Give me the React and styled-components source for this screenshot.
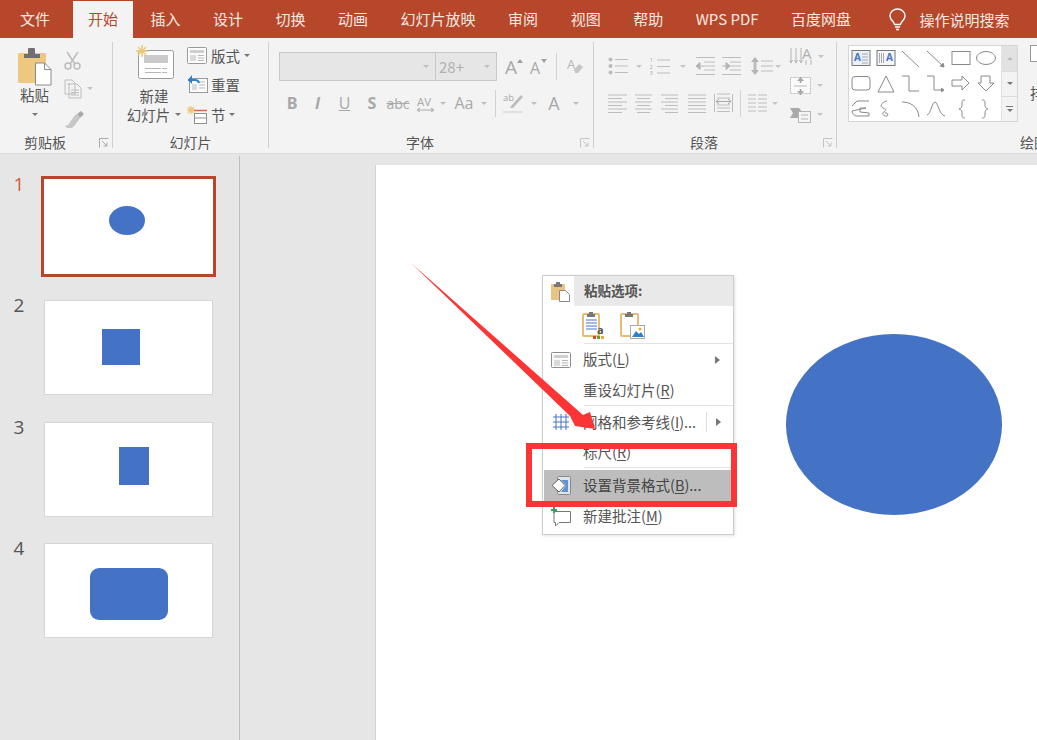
import styled, { createGlobalStyle } from "styled-components";

const FONT = `"Noto Sans CJK SC", "Open Sans", "Liberation Sans", sans-serif`;
const BRAND = "#b7472a";
const OFF = "#bdbdbd";
const BLUE = "#4472c4";

const GlobalStyle = createGlobalStyle`
  html, body { margin: 0; height: 100%; overflow: hidden; }
  #root { height: 100%; }
  svg { display: block; flex: none; overflow: visible; }
`;

const Page = styled.div`
  width: 1037px;
  height: 740px;
  display: flex;
  flex-direction: column;
  overflow: hidden;
  font-family: ${FONT};
  color: #444;
  background: #e6e6e6;
`;

/* title tabs */
const TabBar = styled.nav`
  height: 38px;
  flex: none;
  display: flex;
  align-items: flex-end;
  gap: 2.5px;
  padding-left: 5px;
  background: ${BRAND};
`;
const Tab = styled.div`
  height: 37px;
  padding: 0 15px;
  line-height: 35px;
  font-size: 15px;
  white-space: nowrap;
  color: ${(p) => (p.$active ? BRAND : "#f6e7e2")};
  background: ${(p) => (p.$active ? "#f3f3f3" : "transparent")};
  margin-left: ${(p) => p.$ml || 0}px;
`;
const SearchHint = styled.div`
  display: flex;
  align-items: center;
  gap: 14px;
  height: 37px;
  line-height: 35px;
  margin-left: 20px;
  font-size: 15px;
  color: #f6e7e2;
  white-space: nowrap;
`;

/* ribbon */
const Ribbon = styled.div`
  height: 116px;
  flex: none;
  box-sizing: border-box;
  display: flex;
  align-items: flex-start;
  padding-top: 4px;
  background: #f3f3f3;
  border-bottom: 1px solid #dcdcdc;
`;
const Group = styled.section`
  position: relative;
  flex: none;
  box-sizing: border-box;
  width: ${(p) => p.$w}px;
  height: 106px;
  border-right: ${(p) => (p.$last ? "none" : "1px solid #cfcfcf")};
`;
const GroupBody = styled.div`
  height: 93px;
  display: flex;
  align-items: flex-start;
  padding-left: ${(p) => p.$pl || 0}px;
`;
const GroupLabel = styled.div`
  height: 13px;
  line-height: 14px;
  font-size: 14px;
  color: #555;
  text-align: center;
  white-space: nowrap;
  padding-right: ${(p) => (p.$launcher ? 22 : 0)}px;
`;
const Launcher = styled.div`
  position: absolute;
  right: 3px;
  bottom: 0;
`;
const Caret = styled.i`
  display: block;
  flex: none;
  width: 0;
  height: 0;
  border-left: 3.5px solid transparent;
  border-right: 3.5px solid transparent;
  border-top: 3.5px solid ${(p) => p.$color || "#777"};
`;
const CaretCell = styled.div`
  flex: none;
  width: ${(p) => p.$w}px;
  display: flex;
  justify-content: center;
  margin-top: ${(p) => p.$mt || 0}px;
`;
const Column = styled.div`
  display: flex;
  flex-direction: column;
  align-items: ${(p) => p.$align || "center"};
  width: ${(p) => (p.$w ? `${p.$w}px` : "auto")};
  margin-left: ${(p) => p.$ml || 0}px;
  padding-top: ${(p) => p.$pt || 0}px;
`;
const BigLabel = styled.div`
  font-size: 14.5px;
  line-height: 19px;
  color: #555;
  white-space: nowrap;
  display: flex;
  align-items: center;
  gap: 5px;
  margin-top: ${(p) => p.$mt || 0}px;
`;
const SmallTool = styled.div`
  height: ${(p) => p.$h || 30}px;
  display: flex;
  align-items: center;
  gap: ${(p) => p.$gap || 4}px;
  font-size: 14.5px;
  line-height: 17px;
  color: #555;
  white-space: nowrap;
`;
const ToolRow = styled.div`
  display: flex;
  align-items: center;
  height: ${(p) => p.$h || 24}px;
  margin-top: ${(p) => p.$mt || 0}px;
`;
const FontBox = styled.div`
  box-sizing: border-box;
  width: ${(p) => p.$w}px;
  height: 29px;
  display: flex;
  align-items: center;
  justify-content: space-between;
  padding: 0 6px 0 3px;
  background: #e6e6e6;
  border: 1px solid #c8c8c8;
  border-left-width: ${(p) => (p.$joined ? 0 : 1)}px;
  font-size: 15px;
  color: #b0b0b0;
`;
const Cell = styled.div`
  flex: none;
  width: ${(p) => p.$w}px;
  margin-left: ${(p) => p.$ml || 0}px;
  display: flex;
  justify-content: ${(p) => (p.$left ? "flex-start" : "center")};
  align-items: center;
  font-family: "Open Sans", "Liberation Sans", sans-serif;
  font-size: ${(p) => p.$size || 15}px;
  font-weight: ${(p) => (p.$bold ? 700 : 400)};
  font-style: ${(p) => (p.$italic ? "italic" : "normal")};
  text-decoration: ${(p) => p.$deco || "none"};
  color: #a8a8a8;
`;
const RibbonDivider = styled.div`
  flex: none;
  width: 1px;
  height: 27px;
  margin-left: ${(p) => p.$ml}px;
  margin-right: ${(p) => p.$mr || 0}px;
  background: #d2d2d2;
`;
const StrikeLabel = styled.span`
  text-decoration: line-through;
`;
const Gallery = styled.div`
  margin-top: 3px;
  box-sizing: border-box;
  width: 170px;
  height: 77px;
  display: flex;
  background: #fff;
  border: 1px solid #d6d6d6;
`;
const ShapeGrid = styled.div`
  width: 150px;
  padding: 4px 0 0 2px;
  display: grid;
  grid-template-columns: repeat(6, 25px);
  grid-auto-rows: 25px;
`;
const GalleryScroll = styled.div`
  width: 18px;
  display: flex;
  flex-direction: column;
  border-left: 1px solid #e2e2e2;
`;
const ScrollButton = styled.div`
  flex: ${(p) => p.$grow};
  display: flex;
  flex-direction: column;
  align-items: center;
  justify-content: center;
  gap: 2px;
  background: ${(p) => (p.$off ? "#e2e2e2" : "#f3f3f3")};
  border-bottom: ${(p) => (p.$end ? "none" : "1px solid #dcdcdc")};
`;
const ScrollBar = styled.i`
  display: block;
  width: 7px;
  height: 1px;
  background: #777;
`;
const UpCaret = styled(Caret)`
  transform: rotate(180deg);
`;

/* work area */
const Workspace = styled.main`
  flex: 1;
  min-height: 0;
  display: flex;
`;
const SlideRail = styled.aside`
  flex: none;
  box-sizing: border-box;
  width: 240px;
  margin-top: 2px;
  padding-top: 23px;
  display: flex;
  flex-direction: column;
  gap: 26.3px;
  border-right: 1px solid #bdbdbd;
`;
const RailRow = styled.div`
  display: flex;
  align-items: flex-start;
`;
const SlideNumber = styled.div`
  flex: none;
  width: 38px;
  margin: -5px 6px 0 0;
  text-align: center;
  font-family: "Open Sans", "Liberation Sans", sans-serif;
  font-size: 19px;
  line-height: 20px;
  color: ${(p) => (p.$active ? "#d2593b" : "#555")};
`;
const Thumb = styled.div`
  position: relative;
  box-sizing: border-box;
  width: 169px;
  height: 95px;
  background: #fff;
  border: 1px solid ${(p) => (p.$active ? "#fff" : "#d6d6d6")};
  outline: ${(p) => (p.$active ? `3px solid ${BRAND}` : "none")};
`;
const Shape = styled.div`
  position: absolute;
  left: ${(p) => p.$x}px;
  top: ${(p) => p.$y}px;
  width: ${(p) => p.$w}px;
  height: ${(p) => p.$h}px;
  background: ${BLUE};
  border-radius: ${(p) => p.$radius || "0"};
`;
const Stage = styled.div`
  flex: 1;
  min-width: 0;
  display: flex;
  padding: 11px 0 0 135px;
`;
const Slide = styled.div`
  position: relative;
  flex: 1;
  background: #fff;
  border-left: 1px solid #d2d2d2;
`;

/* context menu */
const Menu = styled.div`
  position: absolute;
  left: 166px;
  top: 110px;
  box-sizing: border-box;
  width: 192px;
  height: 260px;
  background: #fff;
  border: 1px solid #cdcdcd;
  box-shadow: 1px 1px 3px rgba(0, 0, 0, 0.12);
  font-size: 14.5px;
  color: #555;
`;
const MenuHead = styled.div`
  display: flex;
  height: 30px;
`;
const HeadIcon = styled.div`
  width: 31px;
  display: flex;
  justify-content: center;
  align-items: center;
  padding-left: 3px;
  box-sizing: border-box;
`;
const HeadLabel = styled.div`
  flex: 1;
  padding-left: 10px;
  line-height: 29px;
  font-size: 13.5px;
  font-weight: 700;
  color: #555;
  background: #e9e9e9;
`;
const PasteRow = styled.div`
  height: 37px;
  display: flex;
  align-items: center;
  gap: 13px;
  padding-left: 39px;
`;
const MenuSep = styled.div`
  height: 1px;
  margin-left: 41px;
  background: #e2e2e2;
`;
const MenuRow = styled.div`
  height: ${(p) => p.$h}px;
  display: flex;
  align-items: center;
  margin: ${(p) => (p.$hot ? "2px 1px 0" : "0")};
  background: ${(p) => (p.$hot ? "#bdbdbd" : "transparent")};
  color: ${(p) => (p.$hot ? "#444" : "#555")};
  white-space: nowrap;
`;
const MenuIcon = styled.div`
  flex: none;
  width: ${(p) => (p.$hot ? 39 : 40)}px;
  display: flex;
  justify-content: center;
  padding-right: 4px;
  box-sizing: border-box;
`;
const MenuText = styled.div`
  flex: 1;
  padding-bottom: 2px;
  u { text-underline-offset: 2px; }
`;
const SubArrow = styled.i`
  display: block;
  flex: none;
  width: 0;
  height: 0;
  margin-right: ${(p) => p.$mr || 13}px;
  border-top: 4.5px solid transparent;
  border-bottom: 4.5px solid transparent;
  border-left: 5px solid #777;
`;
const SplitBar = styled.i`
  display: block;
  flex: none;
  width: 1px;
  height: 20px;
  margin-right: 9px;
  background: #dcdcdc;
`;

/* red marks drawn over the slide */
const Highlight = styled.div`
  position: absolute;
  left: 150px;
  top: 278px;
  box-sizing: border-box;
  width: 211px;
  height: 64px;
  border: 6px solid #fb3535;
`;
const ArrowMark = styled.svg`
  position: absolute;
  left: 34px;
  top: 97px;
`;

const Ico = ({ w, h, color = OFF, sw = 1, children }) => (
  <svg width={w} height={h} viewBox={`0 0 ${w} ${h}`} fill="none" stroke={color} strokeWidth={sw}>
    {children}
  </svg>
);

const PasteIcon = () => (
  <Ico w={36} h={39} color="#8a8a8a">
    <rect x="1" y="6" width="28" height="30" rx="1" fill="#edc87e" stroke="none" />
    <path d="M7 11V7h4V2a1 1 0 0 1 1-1h5a1 1 0 0 1 1 1v5h5v4z" fill="#707070" stroke="none" />
    <path d="M18.500 16h9l6.500 6.500v15.500h-15.500z" fill="#fff" />
    <path d="M27.500 16v6.500h6.500" />
  </Ico>
);
const ScissorsIcon = () => (
  <Ico w={17} h={19} sw={1.5}>
    <path d="M3 1l8 12M14 1L6 13" />
    <circle cx="4" cy="15" r="3" />
    <circle cx="13" cy="15" r="3" />
  </Ico>
);
const CopyIcon = () => (
  <Ico w={18} h={20}>
    <path d="M1 1h7l3 3v11H1zM5 5h8l4 4v10H5z" fill="#f3f3f3" />
    <path d="M7 11h8M7 13.500h8M7 16h8M3 5h3" />
  </Ico>
);
const BrushIcon = () => (
  <Ico w={20} h={18} color="#c6c6c6" sw={0}>
    <path d="M12 3l4 4-5 7-3 3H3l-2-2 3-1 2-3z" fill="#c6c6c6" />
    <path d="M13 3l4-3 3 3-3 3-1 1z" fill="#a9a9a9" />
  </Ico>
);
const NewSlideIcon = () => (
  <Ico w={40} h={36} color="#9b9b9b">
    <rect x="4.500" y="6.500" width="35" height="28" rx="2" fill="#fff" />
    <rect x="10" y="11" width="24" height="8" fill="#cacaca" stroke="none" />
    <path d="M11 24.500h22M11 28.500h22" strokeDasharray="16 1" stroke="#b5b5b5" />
    <path d="M8 1v12M2 7h12M4 3l8 8M12 3l-8 8" stroke="#eec777" strokeWidth="1.500" />
  </Ico>
);
const LayoutIcon = ({ w = 20, h = 17, color = "#9a9a9a" }) => (
  <Ico w={w} h={h} color={color}>
    <rect x=".5" y=".5" width={w - 1} height={h - 1} rx="1" fill="#fbfbfb" />
    <rect x="3" y="3" width={w - 6} height="3" fill="#cfcfcf" stroke="none" />
    <rect x="3" y="8" width="6" height="6" fill="#dadada" stroke="none" />
    <path d={`M11 8.500h${w - 14}M11 11h${w - 14}M11 13.500h${w - 14}`} stroke="#b8b8b8" />
  </Ico>
);
const ResetIcon = () => (
  <Ico w={21} h={18} color="#9a9a9a">
    <rect x="2.500" y="3.500" width="18" height="14" fill="#fbfbfb" />
    <path d="M12 7h6M12 10h6M12 13h6" stroke="#b8b8b8" />
    <rect x="5" y="9" width="5" height="6" fill="#dadada" stroke="none" />
    <path d="M1 5h7a4 4 0 0 1 4 3" stroke="#2f7fc9" strokeWidth="2" />
    <path d="M5 0L1 5l4 4z" fill="#2f7fc9" stroke="none" />
  </Ico>
);
const SectionIcon = () => (
  <Ico w={21} h={18} color="#8f8f8f">
    <path d="M4 0v8M0 4h8M1 1l6 6M7 1L1 7" stroke="#eec777" strokeWidth="1.400" />
    <path d="M7 4.500h13" stroke="#d0694f" strokeWidth="1.500" />
    <rect x="7.500" y="7.500" width="12" height="10" fill="#fff" />
    <path d="M7.500 12h12" />
  </Ico>
);
const EraserIcon = () => (
  <svg width="17" height="17" viewBox="0 0 17 17">
    <text x="0" y="11" fontSize="13" fontFamily="Open Sans" fill="#b5b5b5">A</text>
    <path d="M7 12l5-6 4 3-5 6H8z" fill="#c6c6c6" />
  </svg>
);
const SpacingIcon = () => (
  <svg width="19" height="17" viewBox="0 0 19 17" fill="none" stroke="#aaa">
    <text x="1" y="11" fontSize="11.500" fontFamily="Open Sans" fill="#aaa" stroke="none">AV</text>
    <path d="M1.500 15h16M1 15l3-2M1 15l3 2M18 15l-3-2M18 15l-3 2" />
  </svg>
);
const GrowFont = ({ up, size }) => (
  <svg width="18" height="17" viewBox="0 0 18 17">
    <text x="0" y="16" fontSize={size} fontFamily="Open Sans" fill="#a8a8a8">A</text>
    <path d={up ? "M12 5l3-4 3 4z" : "M11 1h6l-3 4z"} fill="#a0a0a0" />
  </svg>
);
const HighlightPen = () => (
  <svg width="21" height="20" viewBox="0 0 21 20" fill="none">
    <text x="0" y="8" fontSize="9.500" fontFamily="Open Sans" fill="#a8a8a8">ab</text>
    <path d="M8 13L18 2l2 2L10 15H7z" fill="#bdbdbd" />
    <path d="M0 19h20" stroke="#dfdfdf" strokeWidth="2" />
  </svg>
);
const BulletsIcon = () => (
  <Ico w={20} h={18}>
    <path d="M7 2.500h13M7 9h13M7 15.500h13" />
    <circle cx="2.500" cy="2.500" r="2" fill="#bbb" stroke="none" />
    <circle cx="2.500" cy="9" r="2" fill="#bbb" stroke="none" />
    <circle cx="2.500" cy="15.500" r="2" fill="#bbb" stroke="none" />
  </Ico>
);
const NumberingIcon = () => (
  <svg width="20" height="19" viewBox="0 0 20 19" fill="none" stroke={OFF}>
    <path d="M7 3h13M7 9.500h13M7 16h13" />
    <text x="0" y="5" fontSize="4.500" fontFamily="Open Sans" fill="#999" stroke="none">1</text>
    <text x="0" y="11.500" fontSize="4.500" fontFamily="Open Sans" fill="#999" stroke="none">2</text>
    <text x="0" y="18" fontSize="4.500" fontFamily="Open Sans" fill="#999" stroke="none">3</text>
  </svg>
);
const IndentIcon = ({ more }) => (
  <Ico w={20} h={18}>
    <path d="M1 .5h19M9 5h11M9 9h11M9 13h11M1 17.500h19" />
    <path d={more ? "M1 9h4M5 5.500L9 9l-4 3.500z" : "M9 9H5M5 5.500L1 9l4 3.500z"} fill="#b5b5b5" stroke="#b5b5b5" />
  </Ico>
);
const LineSpacingIcon = () => (
  <Ico w={22} h={20}>
    <path d="M10 5h12M10 10h12M10 15h12" />
    <path d="M4 3v14" strokeWidth="3" />
    <path d="M0 6l4-5 4 5zM0 14l4 5 4-5z" fill="#b5b5b5" stroke="none" />
  </Ico>
);
const alignLines = {
  left: "M0 1h19M0 4.500h14M0 8h19M0 11.500h14M0 15h19M0 18.500h14",
  center: "M0 1h17M2 4.500h13M0 8h17M2 11.500h13M0 15h17M2 18.500h13",
  right: "M0 1h17M4 4.500h13M0 8h17M4 11.500h13M0 15h17M4 18.500h13",
  justify: "M0 1h18M0 4.500h18M0 8h18M0 11.500h18M0 15h18M0 18.500h18",
};
const AlignIcon = ({ kind }) => (
  <Ico w={19} h={19}>
    <path d={alignLines[kind]} />
  </Ico>
);
const DistributeIcon = () => (
  <Ico w={19} h={20}>
    <path d="M.5 1v18M18.500 1v18M3 1h13M3 5h13M3 12h13M3 15h13M3 18.500h13" />
    <path d="M2 8.500h15M2 8.500l3-2.500M2 8.500L5 11M17 8.500L14 6M17 8.500L14 11" stroke="#a8a8a8" />
  </Ico>
);
const ColumnsIcon = () => (
  <Ico w={19} h={19}>
    <path d="M0 1h8M10 1h9M0 5h8M10 5h9M0 9h8M10 9h9M0 13h8M10 13h9M0 17h8M10 17h9" />
  </Ico>
);
const TextDirIcon = () => (
  <svg width="26" height="20" viewBox="0 0 26 20" fill="none" stroke="#b5b5b5">
    <path d="M1 1v15M6 1v15M11 1v15M1 16l-1-3M1 16l1.500-3M6 16l-1.500-3M6 16l1.500-3M11 16l-1.500-3M11 16l1.500-3" />
    <text x="12" y="12" fontSize="15" fontFamily="Open Sans" fill="#b0b0b0" stroke="none">A</text>
    <path d="M16 13v5M21 13v5" />
  </svg>
);
const AlignTextIcon = () => (
  <Ico w={21} h={20} color="#bbb">
    <rect x=".5" y="1.500" width="20" height="16" fill="#fafafa" strokeDasharray="2 1" />
    <path d="M10.500 1v6M10.500 13v6" stroke="#999" strokeWidth="1.500" />
    <path d="M7 5l3.500-4L14 5zM7 15l3.500 4 3.500-4z" fill="#aaa" stroke="none" />
    <path d="M4 10h13" />
  </Ico>
);
const SmartArtIcon = () => (
  <Ico w={21} h={17} color="#b5b5b5">
    <path d="M0 2h9l4 5-4 5H0l3-5z" fill="#a9a9a9" stroke="none" />
    <rect x="8.500" y="5.500" width="12" height="11" fill="#f5f5f5" />
    <path d="M11 9h7M11 13h7" />
  </Ico>
);
const LaunchIcon = ({ color = "#a8a8a8" }) => (
  <Ico w={10} h={10} color={color}>
    <path d="M.5 9.500v-9h9M3 3l5 5M8 4.500V8H4.500" />
  </Ico>
);
const BulbIcon = () => (
  <Ico w={17} h={22} color="#fff" sw={1.400}>
    <path d="M5.500 15.500C5 12 1 11 1 7a7.500 7 0 0 1 15 0c0 4-4 5-4.500 8.500z" />
    <path d="M6 18h5M7 20.500h3" />
  </Ico>
);

const S = "#8a8a8a";
const gallery = [
  <g key="a"><rect x="1" y=".5" width="18" height="15" fill="#eaf0fa" stroke="#777" /><text x="3" y="11" fontSize="10" fontWeight="700" fontFamily="Open Sans" fill={BLUE} stroke="none">A</text><path d="M11 4h6M11 7h6M11 10h6M11 13h6" stroke="#aaa" /></g>,
  <g key="b"><rect x="1" y=".5" width="18" height="15" fill="#f4f6fb" stroke="#777" /><text x="10" y="11" fontSize="10" fontWeight="700" fontFamily="Open Sans" fill={BLUE} stroke="none">A</text><path d="M3.500 3v10M5.500 3v10M7.500 3v10" stroke="#aaa" /></g>,
  <path key="c" d="M1 1l17 16" />,
  <g key="d"><path d="M1 1l17 16" /><path d="M14 16l4 1-1-4" fill={S} /></g>,
  <rect key="e" x="1" y="1.500" width="18" height="13" />,
  <ellipse key="f" cx="10" cy="8" rx="9.500" ry="6.500" />,
  <rect key="g" x="1" y="1.500" width="18" height="13.500" rx="3" />,
  <path key="h" d="M10 1L2 17h16z" />,
  <path key="i" d="M1 1h7v15h10" />,
  <g key="j"><path d="M1 1h7v14h9" /><path d="M15 13l3 2-3 2" fill={S} /></g>,
  <path key="k" d="M1 5h10V1l7 7-7 7v-4H1z" />,
  <path key="l" d="M5 1h9v7h4l-8 8-8-8h3z" />,
  <path key="m" d="M1 6l5-5h12M15 8H9v4l9 1v3H6a5 5 0 0 1-5-5z" />,
  <path key="n" d="M11 1C6 2 3 6 7 8c3 1 4 2 1 4-3 1 0 5 3 4 2-1 0-4-2-3" />,
  <path key="o" d="M1 2c8 0 16 4 17 15" />,
  <path key="p" d="M1 15C5 14 6 2 9 2s4 13 10 14" />,
  <path key="q" d="M14 0c-3 0-3 1-3 4s0 4-3 5c3 1 3 2 3 5s0 4 3 4" />,
  <path key="r" d="M6 0c3 0 3 1 3 4s0 4 3 5c-3 1-3 2-3 5s0 4-3 4" />,
];

const TextPasteIcon = () => (
  <svg width="25" height="28" viewBox="0 0 25 28" fill="none">
    <rect x="1" y="3" width="16" height="22" rx="1" fill="#fff" stroke="#e6bd72" strokeWidth="2" />
    <path d="M5 6V3h2V1h4v2h2v3z" fill="#777" />
    <path d="M4 9h11M4 12h11M4 15h11M4 18h11" stroke="#4472c4" />
    <text x="15" y="23" fontSize="11" fontWeight="700" fontFamily="Open Sans" fill="#555">a</text>
    <rect x="11" y="25" width="3" height="3" fill="#c9502f" />
    <rect x="15" y="25" width="3" height="3" fill="#6f9a3a" />
    <rect x="19" y="25" width="3" height="3" fill="#e8a93a" />
  </svg>
);
const PicturePasteIcon = () => (
  <svg width="25" height="28" viewBox="0 0 25 28" fill="none">
    <rect x="1" y="3" width="17" height="22" rx="1" fill="#fff" stroke="#e6bd72" strokeWidth="2" />
    <path d="M5 6V3h2V1h4v2h2v3z" fill="#777" />
    <rect x="10.500" y="14.500" width="14" height="13" fill="#fff" stroke="#aaa" />
    <path d="M12 26l4-6 3 3 2-2 3 5z" fill="#2f7fc9" />
    <circle cx="20" cy="18" r="1.500" fill="#e8a93a" />
  </svg>
);
const SmallPaste = () => (
  <Ico w={21} h={21} color="#8a8a8a">
    <rect x="1" y="3" width="14" height="16" fill="#e8c381" stroke="none" />
    <path d="M4 6V3h2V1h4v2h2v3z" fill="#777" stroke="none" />
    <path d="M9.500 9.500h6l4 4v7h-10z" fill="#fff" />
  </Ico>
);
const GridIcon = () => (
  <Ico w={16} h={16} color={BLUE}>
    <path d="M3 0v16M8 0v16M13 0v16M0 3h16M0 8h16M0 13h16" />
  </Ico>
);
const FillIcon = () => (
  <svg width="21" height="21" viewBox="0 0 21 21" fill="none" stroke="#666">
    <rect x="6.500" y="1.500" width="13" height="18" rx="1" fill="#dde4ec" stroke="#8a8a8a" />
    <path d="M10 5h7v12h-7l5-6.500z" fill="#5b93d3" stroke="none" />
    <path d="M1 10.500L8 4l6 6.500L8 17z" fill="#fff" />
  </svg>
);
const CommentIcon = () => (
  <Ico w={21} h={20} color="#777">
    <path d="M3 4.500h16.500v11H8l-3.500 3.500v-3.500H3z" fill="#fff" />
    <path d="M3 0v6M0 3h6" stroke="#3f9a6a" strokeWidth="2" />
  </Ico>
);

const tabs = ["文件", "开始", "插入", "设计", "切换", "动画", "幻灯片放映", "审阅", "视图", "帮助", "WPS PDF", "百度网盘"];

const thumbs = [
  { x: 64, y: 26, w: 36, h: 29, radius: "50%" },
  { x: 57, y: 28, w: 38, h: 36 },
  { x: 74, y: 24, w: 30, h: 38 },
  { x: 45, y: 24, w: 78, h: 52, radius: "9px" },
];

export default function App() {
  return (
    <Page>
      <GlobalStyle />
      <TabBar>
        {tabs.map((t) => (
          <Tab key={t} $active={t === "开始"} $ml={t === "开始" ? 5.5 : 0}>
            {t}
          </Tab>
        ))}
        <SearchHint>
          <BulbIcon />
          操作说明搜索
        </SearchHint>
      </TabBar>

      <Ribbon>
        <Group $w={113}>
          <GroupBody $pl={16}>
            <Column $w={37} $pt={5}>
              <PasteIcon />
              <BigLabel $mt={-1}>粘贴</BigLabel>
              <CaretCell $w={37} $mt={9}>
                <Caret />
              </CaretCell>
            </Column>
            <Column $ml={11} $pt={5} $align="flex-start">
              <SmallTool $h={26}><ScissorsIcon /></SmallTool>
              <SmallTool $h={31} $gap={5}><CopyIcon /><Caret $color="#c6c6c6" /></SmallTool>
              <SmallTool $h={31}><BrushIcon /></SmallTool>
            </Column>
          </GroupBody>
          <GroupLabel $launcher>剪贴板</GroupLabel>
          <Launcher><LaunchIcon /></Launcher>
        </Group>

        <Group $w={156}>
          <GroupBody $pl={12}>
            <Column $w={58} $pt={2}>
              <NewSlideIcon />
              <BigLabel $mt={6}>新建</BigLabel>
              <BigLabel>幻灯片<Caret /></BigLabel>
            </Column>
            <Column $ml={4} $align="flex-start">
              <SmallTool $h={27}><LayoutIcon />版式<Caret /></SmallTool>
              <SmallTool $h={30} $gap={3}><ResetIcon />重置</SmallTool>
              <SmallTool $h={31} $gap={3}><SectionIcon />节<Caret /></SmallTool>
            </Column>
          </GroupBody>
          <GroupLabel>幻灯片</GroupLabel>
        </Group>

        <Group $w={325}>
          <GroupBody $pl={10}>
            <Column $pt={10} $align="flex-start">
              <ToolRow $h={29}>
                <FontBox $w={157}><span /><Caret $color="#bdbdbd" /></FontBox>
                <FontBox $w={61} $joined>28+<Caret $color="#bdbdbd" /></FontBox>
                <Cell $w={26} $ml={4}><GrowFont up size={19} /></Cell>
                <Cell $w={24}><GrowFont size={16} /></Cell>
                <RibbonDivider $ml={5} $mr={10} />
                <EraserIcon />
              </ToolRow>
              <ToolRow $mt={10}>
                <Cell $w={26} $bold $size={16}>B</Cell>
                <Cell $w={25} $italic $bold $size={16}>I</Cell>
                <Cell $w={29} $size={16} $deco="underline">U</Cell>
                <Cell $w={26} $bold $size={16}>S</Cell>
                <Cell $w={26} $size={14}><StrikeLabel>abc</StrikeLabel></Cell>
                <Cell $w={28}><SpacingIcon /></Cell>
                <CaretCell $w={8}><Caret $color="#bdbdbd" /></CaretCell>
                <Cell $w={34} $size={16}>Aa</Cell>
                <CaretCell $w={6}><Caret $color="#bdbdbd" /></CaretCell>
                <RibbonDivider $ml={8} />
                <Cell $w={34}><HighlightPen /></Cell>
                <CaretCell $w={8}><Caret $color="#bdbdbd" /></CaretCell>
                <Cell $w={32} $size={18}>A</Cell>
                <CaretCell $w={12}><Caret $color="#bdbdbd" /></CaretCell>
              </ToolRow>
            </Column>
          </GroupBody>
          <GroupLabel $launcher>字体</GroupLabel>
          <Launcher><LaunchIcon color="#c4c4c4" /></Launcher>
        </Group>

        <Group $w={243}>
          <GroupBody $pl={14}>
            <Column $w={182} $pt={12} $align="flex-start">
              <ToolRow>
                <Cell $w={20}><BulletsIcon /></Cell>
                <CaretCell $w={22}><Caret $color="#c4c4c4" /></CaretCell>
                <Cell $w={20}><NumberingIcon /></Cell>
                <CaretCell $w={25}><Caret $color="#c4c4c4" /></CaretCell>
                <Cell $w={26} $left><IndentIcon /></Cell>
                <Cell $w={30} $left><IndentIcon more /></Cell>
                <Cell $w={22}><LineSpacingIcon /></Cell>
                <CaretCell $w={10}><Caret $color="#c4c4c4" /></CaretCell>
              </ToolRow>
              <ToolRow $mt={13}>
                <Cell $w={26.5} $left><AlignIcon kind="left" /></Cell>
                <Cell $w={26.5} $left><AlignIcon kind="center" /></Cell>
                <Cell $w={26.5} $left><AlignIcon kind="right" /></Cell>
                <Cell $w={26.5} $left><AlignIcon kind="justify" /></Cell>
                <Cell $w={26} $left><DistributeIcon /></Cell>
                <RibbonDivider $ml={0} $mr={7} />
                <Cell $w={19}><ColumnsIcon /></Cell>
                <CaretCell $w={16}><Caret $color="#c4c4c4" /></CaretCell>
              </ToolRow>
            </Column>
            <Column $align="flex-start">
              <SmallTool $h={29} $gap={2}><TextDirIcon /><Caret $color="#c4c4c4" /></SmallTool>
              <SmallTool $h={29} $gap={6}><AlignTextIcon /><Caret $color="#c4c4c4" /></SmallTool>
              <SmallTool $h={29} $gap={6}><SmartArtIcon /><Caret $color="#c4c4c4" /></SmallTool>
            </Column>
          </GroupBody>
          <GroupLabel $launcher>段落</GroupLabel>
          <Launcher><LaunchIcon color="#c4c4c4" /></Launcher>
        </Group>

        <Group $w={394} $last>
          <GroupBody $pl={11}>
            <Gallery>
              <ShapeGrid>
                {gallery.map((g) => (
                  <Ico key={g.key} w={20} h={18} color={S}>{g}</Ico>
                ))}
              </ShapeGrid>
              <GalleryScroll>
                <ScrollButton $grow={26} $off><UpCaret $color="#bdbdbd" /></ScrollButton>
                <ScrollButton $grow={24}><Caret /></ScrollButton>
                <ScrollButton $grow={25} $end><ScrollBar /><Caret /></ScrollButton>
              </GalleryScroll>
            </Gallery>
            <Column $ml={12} $pt={3} $align="flex-start">
              <Ico w={24} h={25} color="#999">
                <rect x=".5" y=".5" width="18" height="16" fill="#fff" />
                <path d="M8 17v7" stroke="#edc87e" strokeWidth="2" />
              </Ico>
              <BigLabel $mt={13}>排列</BigLabel>
            </Column>
          </GroupBody>
          <GroupLabel>绘图</GroupLabel>
        </Group>
      </Ribbon>

      <Workspace>
        <SlideRail>
          {thumbs.map((s, i) => (
            <RailRow key={i}>
              <SlideNumber $active={i === 0}>{i + 1}</SlideNumber>
              <Thumb $active={i === 0}>
                <Shape $x={s.x} $y={s.y} $w={s.w} $h={s.h} $radius={s.radius} />
              </Thumb>
            </RailRow>
          ))}
        </SlideRail>
        <Stage>
          <Slide>
            <Shape $x={410} $y={169} $w={216} $h={181} $radius="50%" />
            <Menu>
              <MenuHead>
                <HeadIcon><SmallPaste /></HeadIcon>
                <HeadLabel>粘贴选项:</HeadLabel>
              </MenuHead>
              <PasteRow>
                <TextPasteIcon />
                <PicturePasteIcon />
              </PasteRow>
              <MenuSep />
              <MenuRow $h={31}>
                <MenuIcon><LayoutIcon w={20} h={16} color="#8d8d8d" /></MenuIcon>
                <MenuText>版式(<u>L</u>)</MenuText>
                <SubArrow />
              </MenuRow>
              <MenuRow $h={30}>
                <MenuIcon />
                <MenuText>重设幻灯片(<u>R</u>)</MenuText>
              </MenuRow>
              <MenuSep />
              <MenuRow $h={32}>
                <MenuIcon><GridIcon /></MenuIcon>
                <MenuText>网格和参考线(<u>I</u>)...</MenuText>
                <SplitBar />
                <SubArrow $mr={12} />
              </MenuRow>
              <MenuRow $h={29}>
                <MenuIcon />
                <MenuText>标尺(<u>R</u>)</MenuText>
              </MenuRow>
              <MenuSep />
              <MenuRow $h={31} $hot>
                <MenuIcon $hot><FillIcon /></MenuIcon>
                <MenuText>设置背景格式(<u>B</u>)...</MenuText>
              </MenuRow>
              <MenuRow $h={31}>
                <MenuIcon><CommentIcon /></MenuIcon>
                <MenuText>新建批注(<u>M</u>)</MenuText>
              </MenuRow>
            </Menu>
            <Highlight />
            <ArrowMark width="190" height="175" viewBox="0 0 190 175">
              <path d="M1 1L173 153L180 150L185 167L165 164L160 154Z" fill="#fb3535" />
            </ArrowMark>
          </Slide>
        </Stage>
      </Workspace>
    </Page>
  );
}
